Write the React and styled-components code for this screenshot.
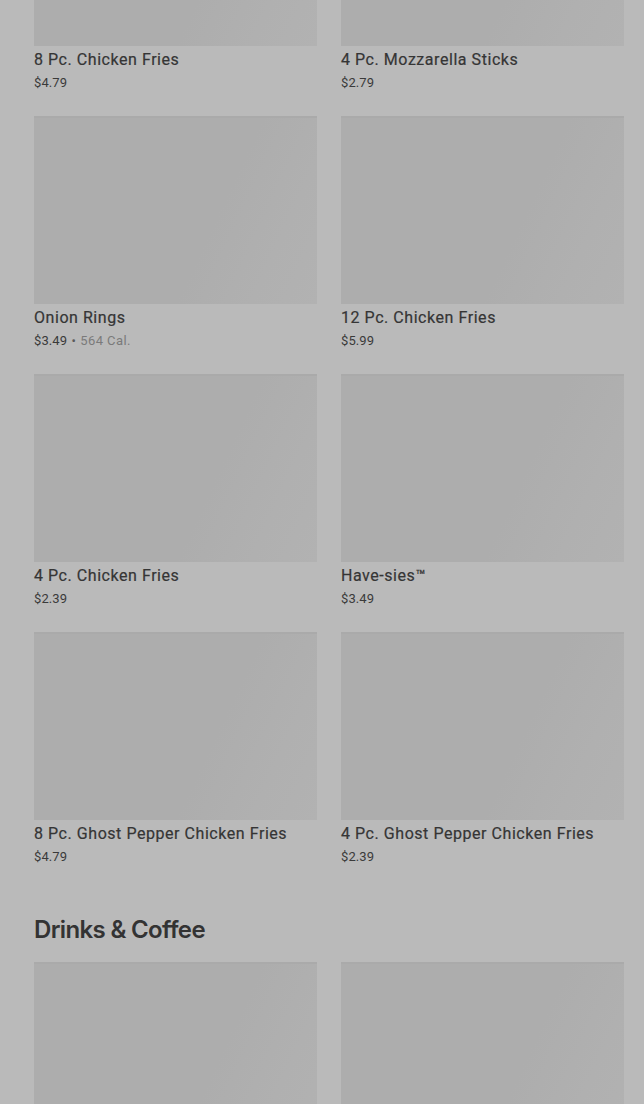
import React from "react";
import styled, { createGlobalStyle } from "styled-components";

const Global = createGlobalStyle`
  html, body { margin: 0; padding: 0; background: #bababa; }
  body { font-family: Roboto, "Liberation Sans", sans-serif; overflow: hidden; }
`;

const Page = styled.main`
  width: 644px;
  height: 1104px;
  overflow: hidden;
  background: #bababa;
  box-sizing: border-box;
  padding: 0 20px 0 34px;
`;

const Scroller = styled.div`
  margin-top: -142px;
`;

const Section = styled.section`
  display: flex;
  flex-direction: column;
  margin-bottom: ${(p) => p.$mb || 0}px;
`;

const Heading = styled.h2`
  margin: 1px 0 16px;
  font-family: Inter, "Liberation Sans", sans-serif;
  font-weight: 600;
  font-size: 24px;
  line-height: 32px;
  letter-spacing: -0.65px;
  color: #333333;
`;

const Grid = styled.div`
  display: grid;
  grid-template-columns: 283px 283px;
  column-gap: 24px;
  row-gap: 23px;
`;

const Card = styled.article`
  display: flex;
  flex-direction: column;
`;

const Thumb = styled.div`
  height: 188px;
  background: linear-gradient(115deg, #adadad 0%, #adadad 62%, #b0b0b0 82%, #b2b2b2 100%);
  box-shadow: inset 0 2px 0 #aaaaaa;
`;

const Title = styled.h3`
  margin: 3px 0 0;
  font-weight: 400;
  font-size: 16px;
  line-height: 22px;
  letter-spacing: 0.55px;
  color: #353535;
  -webkit-text-stroke: 0.2px #353535;
`;

const Meta = styled.p`
  margin: 2px 0 0;
  font-size: 13px;
  line-height: 20px;
  letter-spacing: 0.1px;
  color: #3a3a3a;
`;

const Dot = styled.span`
  margin: 0 1px;
  color: #5a5a5a;
`;

const Cal = styled.span`
  color: #7a7a7a;
  letter-spacing: 0.4px;
`;

const fries = [
  { name: "8 Pc. Chicken Fries", price: "$4.79" },
  { name: "4 Pc. Mozzarella Sticks", price: "$2.79" },
  { name: "Onion Rings", price: "$3.49", cal: "564 Cal." },
  { name: "12 Pc. Chicken Fries", price: "$5.99" },
  { name: "4 Pc. Chicken Fries", price: "$2.39" },
  { name: "Have-sies™", price: "$3.49" },
  { name: "8 Pc. Ghost Pepper Chicken Fries", price: "$4.79" },
  { name: "4 Pc. Ghost Pepper Chicken Fries", price: "$2.39" },
];

const drinks = [{ name: "" }, { name: "" }];

function Item({ item }) {
  return (
    <Card>
      <Thumb />
      {item.name && <Title>{item.name}</Title>}
      {item.price && (
        <Meta>
          {item.price}
          {item.cal && (
            <>
              {" "}
              <Dot>•</Dot> <Cal>{item.cal}</Cal>
            </>
          )}
        </Meta>
      )}
    </Card>
  );
}

export default function App() {
  return (
    <>
      <Global />
      <Page>
        <Scroller>
          <Section $mb={46}>
            <Grid>
              {fries.map((it, i) => (
                <Item key={i} item={it} />
              ))}
            </Grid>
          </Section>
          <Section>
            <Heading>Drinks &amp; Coffee</Heading>
            <Grid>
              {drinks.map((it, i) => (
                <Item key={i} item={it} />
              ))}
            </Grid>
          </Section>
        </Scroller>
      </Page>
    </>
  );
}
